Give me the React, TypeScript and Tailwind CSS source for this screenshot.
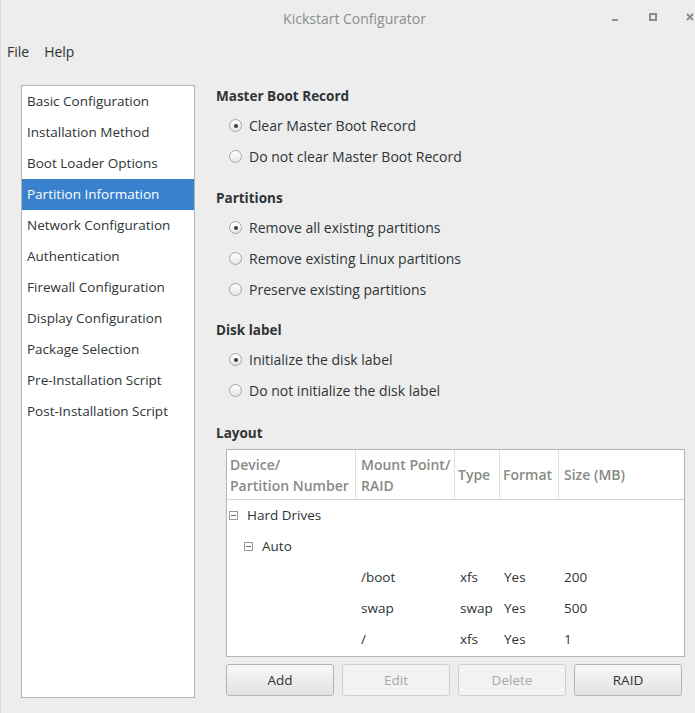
import React from "react";

const navItems = [
  "Basic Configuration",
  "Installation Method",
  "Boot Loader Options",
  "Partition Information",
  "Network Configuration",
  "Authentication",
  "Firewall Configuration",
  "Display Configuration",
  "Package Selection",
  "Pre-Installation Script",
  "Post-Installation Script",
];

const Radio = ({ label, checked }: { label: string; checked?: boolean }) => (
  <div className="flex h-[31px] items-center pl-[13px]">
    <span className="flex h-[13px] w-[13px] items-center justify-center rounded-full border border-[#a5a5a5] bg-gradient-to-b from-white to-[#e6e6e6]">
      {checked && <span className="h-[4px] w-[4px] rounded-full bg-[#3b3b3b]" />}
    </span>
    <span className="ml-[7px] text-[14px]">{label}</span>
  </div>
);

const Heading = ({ children, className = "" }: { children: React.ReactNode; className?: string }) => (
  <div className={"flex h-[22px] items-center pt-[1px] text-[13.5px] font-bold " + className}>{children}</div>
);

const Expander = () => (
  <span className="relative flex h-[9px] w-[9px] items-center justify-center border border-[#9a9a9a] bg-white">
    <span className="h-px w-[5px] bg-[#666]" />
  </span>
);

const rows = [
  { mount: "/boot", type: "xfs", format: "Yes", size: "200" },
  { mount: "swap", type: "swap", format: "Yes", size: "500" },
  { mount: "/", type: "xfs", format: "Yes", size: "1" },
];

const Btn = ({ label, disabled }: { label: string; disabled?: boolean }) => (
  <div
    className={
      "flex h-[32px] w-[108px] shrink-0 items-center justify-center rounded-[3px] border " +
      (disabled
        ? "border-[#cfcfcf] bg-[#f2f2f2] text-[#a8a8a8]"
        : "border-[#b3b3b3] bg-gradient-to-b from-[#f8f8f8] to-[#e2e2e2] text-[#2e3436]")
    }
  >
    {label}
  </div>
);

export default function App() {
  return (
    <div
      className="h-[713px] w-[695px] overflow-hidden bg-[#ededed] text-[13.5px] text-[#2e3436] shadow-[inset_1px_0_0_#d8dde4]"
      style={{ fontFamily: "'Open Sans', 'DejaVu Sans', sans-serif" }}
    >
      {/* title bar */}
      <div className="relative flex h-[37px] items-center justify-center">
        <span className="ml-[14px] text-[14px] text-[#8b8e8f]">Kickstart Configurator</span>
        <svg className="absolute left-[611px] top-[13px]" width="84" height="10" viewBox="0 0 84 10">
          <rect x="1" y="6" width="6" height="2" fill="#8b8e8f" />
          <rect x="39" y="1" width="6" height="6" fill="none" stroke="#8b8e8f" strokeWidth="2" />
          <path d="M76 1 L82 7 M82 1 L76 7" stroke="#8b8e8f" strokeWidth="2" />
        </svg>
      </div>

      {/* menu */}
      <div className="flex h-[29px] items-center gap-[15px] pl-[7px] text-[14px]">
        <span>File</span>
        <span>Help</span>
      </div>

      <div className="mt-[19px] flex">
        {/* sidebar */}
        <div className="ml-[21px] h-[613px] w-[174px] border border-[#b4b4b4] bg-white">
          {navItems.map((item) => (
            <div
              key={item}
              className={
                "flex h-[31px] items-center pl-[5px] " +
                (item === "Partition Information" ? "bg-[#3a81cd] text-white" : "")
              }
            >
              {item}
            </div>
          ))}
        </div>

        {/* content */}
        <div className="ml-[21px] w-[470px]">
          <Heading>Master Boot Record</Heading>
          <div className="mt-[3px]">
            <Radio label="Clear Master Boot Record" checked />
            <Radio label="Do not clear Master Boot Record" />
          </div>

          <Heading className="mt-[15px]">Partitions</Heading>
          <div className="mt-[3px]">
            <Radio label="Remove all existing partitions" checked />
            <Radio label="Remove existing Linux partitions" />
            <Radio label="Preserve existing partitions" />
          </div>

          <Heading className="mt-[14px]">Disk label</Heading>
          <div className="mt-[3px]">
            <Radio label="Initialize the disk label" checked />
            <Radio label="Do not initialize the disk label" />
          </div>

          <Heading className="mt-[16px]">Layout</Heading>

          <div className="ml-[10px] mt-[5px] h-[208px] w-[459px] border border-[#b4b4b4] bg-white">
            <div className="grid h-[50px] grid-cols-[129px_99px_45px_59px_1fr] border-b border-[#d5d5d5] text-[14px] font-semibold leading-[21px] text-[#888a85]">
              <div className="flex flex-col justify-center border-r border-[#e0e0e0] pl-[3px]">
                <span>Device/</span>
                <span>Partition Number</span>
              </div>
              <div className="flex flex-col justify-center border-r border-[#e0e0e0] pl-[5px]">
                <span>Mount Point/</span>
                <span>RAID</span>
              </div>
              <div className="flex items-center border-r border-[#e0e0e0] pl-[3px]">Type</div>
              <div className="flex items-center border-r border-[#e0e0e0] pl-[3px]">Format</div>
              <div className="flex items-center pl-[5px]">Size (MB)</div>
            </div>

            <div className="flex h-[31px] items-center gap-[9px] pl-[2px]">
              <Expander />
              <span>Hard Drives</span>
            </div>
            <div className="flex h-[31px] items-center gap-[9px] pl-[17px]">
              <Expander />
              <span>Auto</span>
            </div>
            {rows.map((r) => (
              <div key={r.mount} className="grid h-[31px] grid-cols-[129px_99px_45px_59px_1fr] items-center">
                <span />
                <span className="pl-[5px]">{r.mount}</span>
                <span className="pl-[5px]">{r.type}</span>
                <span className="pl-[4px]">{r.format}</span>
                <span className="pl-[5px]">{r.size}</span>
              </div>
            ))}
          </div>

          <div className="ml-[10px] mt-[7px] flex gap-[8px]">
            <Btn label="Add" />
            <Btn label="Edit" disabled />
            <Btn label="Delete" disabled />
            <Btn label="RAID" />
          </div>
        </div>
      </div>
    </div>
  );
}
